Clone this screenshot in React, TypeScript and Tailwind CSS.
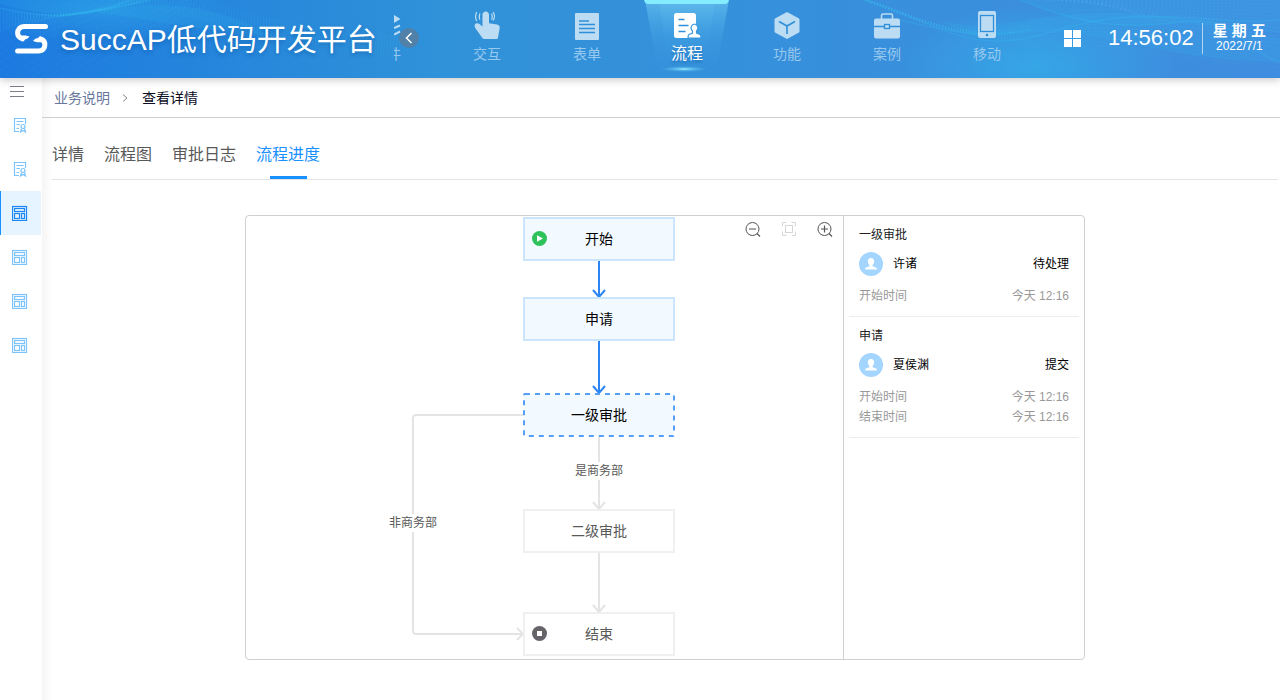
import type { ReactNode } from "react";

const FONT = "font-['Liberation_Sans','Noto_Sans_CJK_SC',sans-serif]";

/* ---------- icons ---------- */

function LogoIcon() {
  return (
    <svg width="33" height="30" viewBox="0 0 33 30" fill="none" aria-hidden="true">
      <path
        d="M30.500 2.600H9.500C4.500 2.600 2.600 6 2.600 9C2.600 11.500 4.500 13.700 7.500 14.800"
        stroke="white"
        strokeWidth="5"
        strokeLinecap="round"
      />
      <path d="M5 13.500C8 16.500 12 16 14.500 12.600L10.500 11.500H5Z" fill="white" />
      <path
        d="M2.600 26.900H23.500C28.200 26.900 29.900 23.500 29.900 20.500C29.900 18 28.300 15.900 25.500 14.900"
        stroke="white"
        strokeWidth="5"
        strokeLinecap="round"
      />
      <path d="M28 16C25 12.800 20.500 13.300 18 17L22 18.200H28Z" fill="white" />
    </svg>
  );
}

function ComponentIcon() {
  return (
    <svg width="28" height="30" viewBox="0 0 28 30" aria-hidden="true">
      <path d="M2 8H21V5L27.500 9L21 13V11H2Z" fill="currentColor" />
      <path d="M21 18L27 15.500M21 24.500L27 21.500" stroke="currentColor" strokeWidth="2" />
    </svg>
  );
}

function TouchIcon() {
  return (
    <svg width="28" height="30" viewBox="0 0 28 30" fill="none" aria-hidden="true">
      <path
        d="M9.500 5C9.500 3 10.800 1.500 12.700 1.500S16 3 16 5V13.300L24 14.500C26 14.900 27 16.200 26.700 18L25 27.500C24.800 28.600 24.200 29 23.200 29H11.500C10.500 29 9.800 28.700 9.200 27.800L2.400 18.200C1 16 1.500 14 3.300 13.300C5 12.800 7 14 9.500 16.500Z"
        fill="currentColor"
      />
      <path
        d="M6.800 3.500C6 6 6 7.500 6.800 9.800M3.700 2C2 5.500 2.200 8 3.700 11M18.700 3.500C19.500 6 19.500 7.500 18.700 9.800M20.200 2C22 5 21.800 8 20 10.500"
        stroke="currentColor"
        strokeWidth="1.200"
      />
    </svg>
  );
}

function FormIcon() {
  return (
    <svg width="28" height="30" viewBox="0 0 28 30" aria-hidden="true">
      <rect x="2" y="3" width="24" height="27" rx="1" fill="currentColor" />
      <path d="M6 11H16M6 14.500H22M6 18.500H22M6 22.500H22" stroke="#2f8fd8" strokeWidth="1.300" />
    </svg>
  );
}

function FlowIcon() {
  return (
    <svg width="28" height="30" viewBox="0 0 28 30" aria-hidden="true">
      <rect x="1" y="3" width="22" height="25" rx="2.500" fill="white" />
      <path d="M5.500 9.500H11.500M5.500 15.500H15.500M5.500 21.500H12.500" stroke="#2f8fd8" strokeWidth="1.600" />
      <path
        d="M21.500 14A4 4 0 0 1 23.500 21V23L27 24.500Q28 25 28 28H15Q15 25 16 24.500L19.500 23V21A4 4 0 0 1 21.500 14Z"
        fill="white"
        stroke="#3a98de"
        strokeWidth="1.200"
      />
    </svg>
  );
}

function CubeIcon() {
  return (
    <svg width="28" height="30" viewBox="0 0 28 30" aria-hidden="true">
      <path
        d="M14 2L26 8.500Q26.500 9 26.500 10V21Q26.500 22 26 22.500L14 29L2 22.500Q1.500 22 1.500 21V10Q1.500 9 2 8.500Z"
        fill="currentColor"
      />
      <path d="M6 11.500L14 16L22 11.500M14 16V24" fill="none" stroke="#2f8fd8" strokeWidth="1.600" />
    </svg>
  );
}

function CaseIcon() {
  return (
    <svg width="28" height="30" viewBox="0 0 28 30" aria-hidden="true">
      <path d="M8.500 9V5.500Q8.500 4 10 4H18Q19.500 4 19.500 5.500V9" fill="none" stroke="currentColor" strokeWidth="1.600" />
      <rect x="1" y="8.500" width="26" height="20" rx="2" fill="currentColor" />
      <path d="M1 16.500H11M17 16.500H27" stroke="#2f8fd8" strokeWidth="1.300" />
      <rect x="11.500" y="14.500" width="5" height="4" fill="none" stroke="#2f8fd8" strokeWidth="1.300" />
    </svg>
  );
}

function PhoneIcon() {
  return (
    <svg width="28" height="30" viewBox="0 0 28 30" aria-hidden="true">
      <rect x="5" y="1" width="18" height="27" rx="2" fill="currentColor" />
      <rect x="7.500" y="5.500" width="13" height="16" fill="none" stroke="#2f8fd8" strokeWidth="1.300" />
      <circle cx="14" cy="25" r="1.300" fill="#2f8fd8" />
    </svg>
  );
}

function CertIcon() {
  return (
    <svg width="14" height="16" viewBox="0 0 14 16" fill="none" stroke="currentColor" strokeWidth="1.200" aria-hidden="true">
      <path d="M12.500 7V1.500H1.500V14.500H6M3.500 4.500H10.500M3.500 7.500H7M3.500 11.500H6" />
      <circle cx="10" cy="9.500" r="2" />
      <path d="M8.500 11.500L7.500 15L10 13.500L12.500 15L11.500 11.500" />
    </svg>
  );
}

function LayoutIcon() {
  return (
    <svg width="16" height="16" viewBox="0 0 16 16" fill="none" stroke="currentColor" strokeWidth="1.200" aria-hidden="true">
      <rect x="0.500" y="1.500" width="14" height="14" />
      <rect x="2.500" y="3.500" width="10" height="3" />
      <rect x="2.500" y="8.500" width="5" height="5" />
      <rect x="9.500" y="8.500" width="3" height="5" />
    </svg>
  );
}

function ZoomIcon({ plus }: { plus?: boolean }) {
  return (
    <svg width="16" height="16" viewBox="0 0 16 16" fill="none" stroke="#555" aria-hidden="true">
      <circle cx="7.500" cy="7" r="6.500" />
      <path d={plus ? "M4 7H11M7.500 3.500V10.500M12 11.500L15 14.500" : "M4 7H11M12 11.500L15 14.500"} strokeWidth="1.200" />
    </svg>
  );
}

function FitIcon() {
  return (
    <svg width="16" height="16" viewBox="0 0 16 16" fill="none" stroke="#d6d6d6" aria-hidden="true">
      <path d="M1.500 4.500V0.500H5.500M10.500 0.500H14.500V4.500M14.500 9.500V13.500H10.500M5.500 13.500H1.500V9.500" />
      <rect x="4.500" y="3.500" width="7" height="7" />
    </svg>
  );
}

/* ---------- header ---------- */

function HeaderWaves() {
  const lines = Array.from({ length: 12 }, (_, i) => i);
  return (
    <svg
      className="pointer-events-none absolute inset-0 size-full"
      viewBox="0 0 1280 78"
      preserveAspectRatio="none"
      fill="none"
      aria-hidden="true"
    >
      <defs>
        <radialGradient id="spot">
          <stop offset="0" stopColor="#33b0ea" stopOpacity="0.7" />
          <stop offset="1" stopColor="#33b0ea" stopOpacity="0" />
        </radialGradient>
      </defs>
      <ellipse cx="1035" cy="66" rx="140" ry="62" fill="url(#spot)" />
      <ellipse cx="100" cy="10" rx="130" ry="34" fill="url(#spot)" opacity="0.6" />
      <g fill="#35bff0" fillOpacity="0.14">
        <path d="M0 4C50 18 90 18 150 0H0Z" />
        <path d="M95 12C170 -4 230 10 270 36C200 30 150 20 95 12Z" />
        <path d="M940 20C990 34 1010 18 1080 14S1200 20 1280 38V62C1200 62 1140 44 1080 34S990 52 940 20Z" />
        <path d="M1020 0C1080 24 1120 30 1180 22L1280 34V0Z" />
      </g>
      <g stroke="#3cc4f0" strokeOpacity="0.22" strokeDasharray="1 2">
        {lines.map((i) => (
          <path key={i} d={`M0 ${10 + i * 2}C60 ${20 - i} 100 ${12 + i} 160 -${i * 2}`} />
        ))}
        {lines.map((i) => (
          <path key={i} d={`M${110 + i * 9} 0C${180 + i * 4} ${10 - i} 240 ${36 - i} 400 ${58 - i * 2}`} />
        ))}
        {lines.map((i) => (
          <path key={i} d={`M860 -2C920 ${14 + i} 960 ${46 - i} 1030 ${22 + i * 2}S1160 ${14 + i * 3} 1280 ${28 + i * 4}`} />
        ))}
      </g>
      <g stroke="#7cc4f8" strokeOpacity="0.18" strokeDasharray="1 3">
        {lines.map((i) => (
          <path key={i} d={`M0 ${30 + i * 8}L${80 + i * 12} 0`} />
        ))}
        {lines.map((i) => (
          <path key={i} d={`M${1030 + i * 8} 0C1130 ${i * 2} 1200 ${i * 3} 1280 ${i * 4}`} />
        ))}
      </g>
      <g stroke="#35bff0" strokeOpacity="0.26" strokeWidth="1.500">
        <path d="M0 8C50 20 90 18 130 0" />
        <path d="M60 15C110 10 130 4 150 0" />
        <path d="M865 0C910 12 950 42 1000 41S1080 12 1170 17S1250 22 1280 20" />
        <path d="M1020 0C1080 24 1120 30 1180 22S1240 50 1280 62" />
        <path d="M900 20C960 34 980 38 1030 30" />
      </g>
    </svg>
  );
}

type NavEntry = { label: string; icon: ReactNode; active?: boolean };

const NAV: NavEntry[] = [
  { label: "组件", icon: <ComponentIcon /> },
  { label: "交互", icon: <TouchIcon /> },
  { label: "表单", icon: <FormIcon /> },
  { label: "流程", icon: <FlowIcon />, active: true },
  { label: "功能", icon: <CubeIcon /> },
  { label: "案例", icon: <CaseIcon /> },
  { label: "移动", icon: <PhoneIcon /> },
];

function NavItem({ label, icon, active }: NavEntry) {
  if (active) {
    return (
      <a href="#" aria-current="page" className="relative flex w-[100px] shrink-0 flex-col items-center pt-2.5 text-white">
        <svg className="absolute inset-0" width="100" height="78" viewBox="0 0 100 78" aria-hidden="true">
          <defs>
            <linearGradient id="beam" x1="0" y1="0" x2="0" y2="1">
              <stop offset="0" stopColor="#6cc4f0" stopOpacity="0.7" />
              <stop offset="0.6" stopColor="#45aae8" stopOpacity="0.25" />
              <stop offset="1" stopColor="#45aae8" stopOpacity="0" />
            </linearGradient>
            <radialGradient id="glow">
              <stop offset="0" stopColor="#a8f2ff" />
              <stop offset="0.35" stopColor="#6fd0f5" stopOpacity="0.7" />
              <stop offset="1" stopColor="#4ab0ec" stopOpacity="0" />
            </radialGradient>
          </defs>
          <path d="M8 0H92L80 66H20Z" fill="url(#beam)" />
          <path d="M22 3H78L68 66H32Z" fill="url(#beam)" opacity="0.4" />
          <path d="M7 0H92Q91 4 88 4H11Q8 4 7 0Z" fill="#84ecff" />
          <ellipse cx="47" cy="69" rx="24" ry="3" fill="url(#glow)" />
        </svg>
        <span className="relative">{icon}</span>
        <span className="relative mt-0.5 text-base leading-6 [text-shadow:0_2px_3px_#0a4f9a80]">{label}</span>
      </a>
    );
  }
  return (
    <a href="#" className="flex w-[100px] shrink-0 flex-col items-center pt-2.5 text-[#bcdcf3]">
      {icon}
      <span className="mt-0.5 text-sm leading-6 text-[#97c8ee]">{label}</span>
    </a>
  );
}

function Header() {
  return (
    <header className="relative z-10 flex h-[78px] shrink-0 bg-linear-to-r from-[#1c7ae0] via-[#3092d8] via-35% to-[#3f8de0] shadow-[0_2px_8px_#00000038]">
      <HeaderWaves />
      <div className="relative flex w-[394px] shrink-0 items-center gap-3 pl-[15px]">
        <LogoIcon />
        <h1 className="pt-0.5 text-[30px] leading-10 whitespace-nowrap text-white [text-shadow:0_2px_4px_#0a4f9a80]">
          SuccAP低代码开发平台
        </h1>
      </div>
      <div className="relative w-[643px] shrink-0">
        <nav className="flex h-full justify-end overflow-hidden">
          {NAV.map((item) => (
            <NavItem key={item.label} {...item} />
          ))}
        </nav>
        <button
          type="button"
          aria-label="向左"
          className="absolute top-7 left-[5px] flex size-5 items-center justify-center rounded-full bg-[#5181a8]"
        >
          <svg width="8" height="12" viewBox="0 0 8 12" fill="none" stroke="white" strokeWidth="1.500" aria-hidden="true">
            <path d="M6.500 1L1.500 6L6.500 11" />
          </svg>
        </button>
      </div>
      <div className="relative ml-auto flex items-center pr-3.5 pb-0.5 text-white">
        <button type="button" aria-label="应用" className="grid grid-cols-2 gap-px">
          <span className="size-2 bg-white" />
          <span className="size-2 bg-white" />
          <span className="size-2 bg-white" />
          <span className="size-2 bg-white" />
        </button>
        <time className="ml-[27px] text-[22px] leading-8">14:56:02</time>
        <div className="ml-2 h-[31px] w-px bg-white/60" />
        <div className="ml-2.5 flex flex-col items-center">
          <span className="text-[15px] leading-4 font-bold whitespace-nowrap">星 期 五</span>
          <time className="text-xs leading-[14px]">2022/7/1</time>
        </div>
      </div>
    </header>
  );
}

/* ---------- sidebar ---------- */

const SIDE_ITEMS = ["cert", "cert", "active", "layout", "layout", "layout"];

function Sidebar() {
  return (
    <aside className="w-[42px] shrink-0 bg-white">
      <button type="button" aria-label="菜单" className="flex h-[25px] w-full items-center pt-0.5 pl-2.5">
        <svg width="14" height="12" viewBox="0 0 14 12" stroke="#7b7f88" aria-hidden="true">
          <path d="M0 0.500H14M0 5.500H14M0 10.500H14" />
        </svg>
      </button>
      <nav className="w-[41px]">
        {SIDE_ITEMS.map((kind, i) => (
          <a
            key={i}
            href="#"
            aria-label={`菜单 ${i + 1}`}
            className={
              kind === "active"
                ? "flex h-11 items-center border-l border-[#1890ff] bg-[#e6f4ff] pl-[11px] text-[#1c86f5]"
                : "flex h-11 items-center pl-3 text-[#7cc4fb]"
            }
          >
            {kind === "cert" ? (
              <span className="pl-px">
                <CertIcon />
              </span>
            ) : (
              <LayoutIcon />
            )}
          </a>
        ))}
      </nav>
    </aside>
  );
}

/* ---------- flow chart ---------- */

function FlowNode({ className, children }: { className: string; children: ReactNode }) {
  return (
    <div className={`absolute left-[277px] flex h-11 w-[152px] items-center justify-center text-sm ${className}`}>
      {children}
    </div>
  );
}

function FlowCanvas() {
  return (
    <div className="relative h-[443px] min-w-0 flex-1">
      <svg className="absolute inset-0" width="597" height="443" viewBox="0 0 597 443" fill="none" strokeWidth="2" aria-hidden="true">
        <g stroke="#e4e4e4">
          <path d="M277 199H170Q167 199 167 202V415Q167 418 170 418H277M271 412L277 418L271 424" />
          <path d="M353 221V293M347 286L353 293L359 286" />
          <path d="M353 337V396M347 389L353 396L359 389" />
        </g>
        <g stroke="#2b85f5">
          <path d="M353 45V82M347 74L353 81L359 74" />
          <path d="M353 125V178M347 170L353 177L359 170" />
        </g>
      </svg>

      <FlowNode className="top-px border-2 border-[#cbe6fc] bg-[#f2f9ff] text-black">
        <svg className="absolute left-1.5" width="16" height="16" viewBox="0 0 16 16" aria-hidden="true">
          <circle cx="8.500" cy="7.500" r="7.500" fill="#2fc25b" />
          <path d="M6 4.300L12 7.500L6 10.700Z" fill="white" />
        </svg>
        开始
      </FlowNode>
      <FlowNode className="top-[81px] border-2 border-[#cbe6fc] bg-[#f2f9ff] text-black">申请</FlowNode>
      <FlowNode className="top-[177px] text-black">
        <svg className="absolute inset-0" width="152" height="44" viewBox="0 0 152 44" aria-hidden="true">
          <rect x="1" y="1" width="150" height="42" rx="1" fill="#f2f9ff" stroke="#579ef7" strokeWidth="2" strokeDasharray="5 5" />
        </svg>
        <span className="relative">一级审批</span>
      </FlowNode>
      <FlowNode className="top-[293px] border-2 border-[#f0f0f0] bg-white text-[#595959]">二级审批</FlowNode>
      <FlowNode className="top-[396px] border-2 border-[#f0f0f0] bg-white text-[#595959]">
        <svg className="absolute left-1.5" width="16" height="16" viewBox="0 0 16 16" aria-hidden="true">
          <circle cx="8.500" cy="7.500" r="7.500" fill="#666369" />
          <rect x="6" y="5" width="5" height="5" fill="white" />
        </svg>
        结束
      </FlowNode>

      <span className="absolute top-[246px] left-[329px] bg-white text-xs leading-[18px] text-[#595959]">是商务部</span>
      <span className="absolute top-[298px] left-[143px] bg-white text-xs leading-[18px] text-[#595959]">非商务部</span>

      <div className="absolute top-1.5 right-2.5 flex gap-5">
        <button type="button" aria-label="缩小">
          <ZoomIcon />
        </button>
        <button type="button" aria-label="适应" disabled>
          <FitIcon />
        </button>
        <button type="button" aria-label="放大">
          <ZoomIcon plus />
        </button>
      </div>
    </div>
  );
}

/* ---------- approval log ---------- */

const STEPS = [
  { title: "一级审批", user: "许诸", state: "待处理", times: [["开始时间", "今天 12:16"]] },
  {
    title: "申请",
    user: "夏侯渊",
    state: "提交",
    times: [
      ["开始时间", "今天 12:16"],
      ["结束时间", "今天 12:16"],
    ],
  },
];

function StepList() {
  return (
    <section className="w-[241px] shrink-0 border-l border-[#d0d0d0] px-[5px] text-xs">
      {STEPS.map((step) => (
        <div key={step.title} className="border-b border-[#ececec] px-2.5 pt-2.5 pb-2.5">
          <h3 className="leading-[18px] text-[#222]">{step.title}</h3>
          <div className="mt-2 flex h-6 items-center text-black">
            <svg width="24" height="24" viewBox="0 0 24 24" aria-hidden="true">
              <circle cx="12" cy="12" r="12" fill="#a3d5ff" />
              <path
                d="M12 6C14.200 6 15.300 7.600 15.200 9.600C15.100 11.200 14.400 12.200 13.600 13V14.200L17 15.400Q18 15.800 18 17.500H6Q6 15.800 7 15.400L10.400 14.200V13C9.600 12.200 8.900 11.200 8.800 9.600C8.700 7.600 9.800 6 12 6Z"
                fill="white"
              />
            </svg>
            <span className="ml-2.5">{step.user}</span>
            <span className="ml-auto">{step.state}</span>
          </div>
          <dl className="mt-2.5 text-[#999]">
            {step.times.map(([name, value]) => (
              <div key={name} className="flex justify-between leading-5">
                <dt>{name}</dt>
                <dd>{value}</dd>
              </div>
            ))}
          </dl>
        </div>
      ))}
    </section>
  );
}

/* ---------- page ---------- */

const TABS = ["详情", "流程图", "审批日志", "流程进度"];

export default function App() {
  return (
    <div className={`flex min-h-screen flex-col bg-white ${FONT}`}>
      <Header />
      <div className="flex flex-1">
        <Sidebar />
        <main className="min-w-0 flex-1 bg-linear-to-r from-[#f5f5f5] to-white to-[10px]">
          <nav aria-label="面包屑" className="flex h-10 items-center border-b border-[#cfcfcf] pl-3 text-sm">
            <a href="#" className="text-[#68779c]">
              业务说明
            </a>
            <svg className="mx-3" width="8" height="8" viewBox="0 0 8 8" fill="none" stroke="#888" aria-hidden="true">
              <path d="M1 0.500L5 4L1 7.500" />
            </svg>
            <span className="text-[#0c0c1e]">查看详情</span>
          </nav>

          <div className="pr-0.5 pl-2.5">
            <div role="tablist" className="flex gap-5 border-b border-[#e4e4e4] pt-[13px] text-base text-[#595959]">
              {TABS.map((tab) =>
                tab === "流程进度" ? (
                  <button key={tab} type="button" role="tab" aria-selected className="flex flex-col items-center text-[#1890ff]">
                    <span className="h-[45px] leading-[48px]">{tab}</span>
                    <span className="h-[3px] w-[37px] bg-[#1890ff]" />
                  </button>
                ) : (
                  <button key={tab} type="button" role="tab" aria-selected={false} className="h-12 leading-[48px]">
                    {tab}
                  </button>
                ),
              )}
            </div>

            <div className="mx-auto mt-[35px] flex w-[840px] rounded border border-[#d0d0d0] bg-white">
              <FlowCanvas />
              <StepList />
            </div>
          </div>
        </main>
      </div>
    </div>
  );
}
